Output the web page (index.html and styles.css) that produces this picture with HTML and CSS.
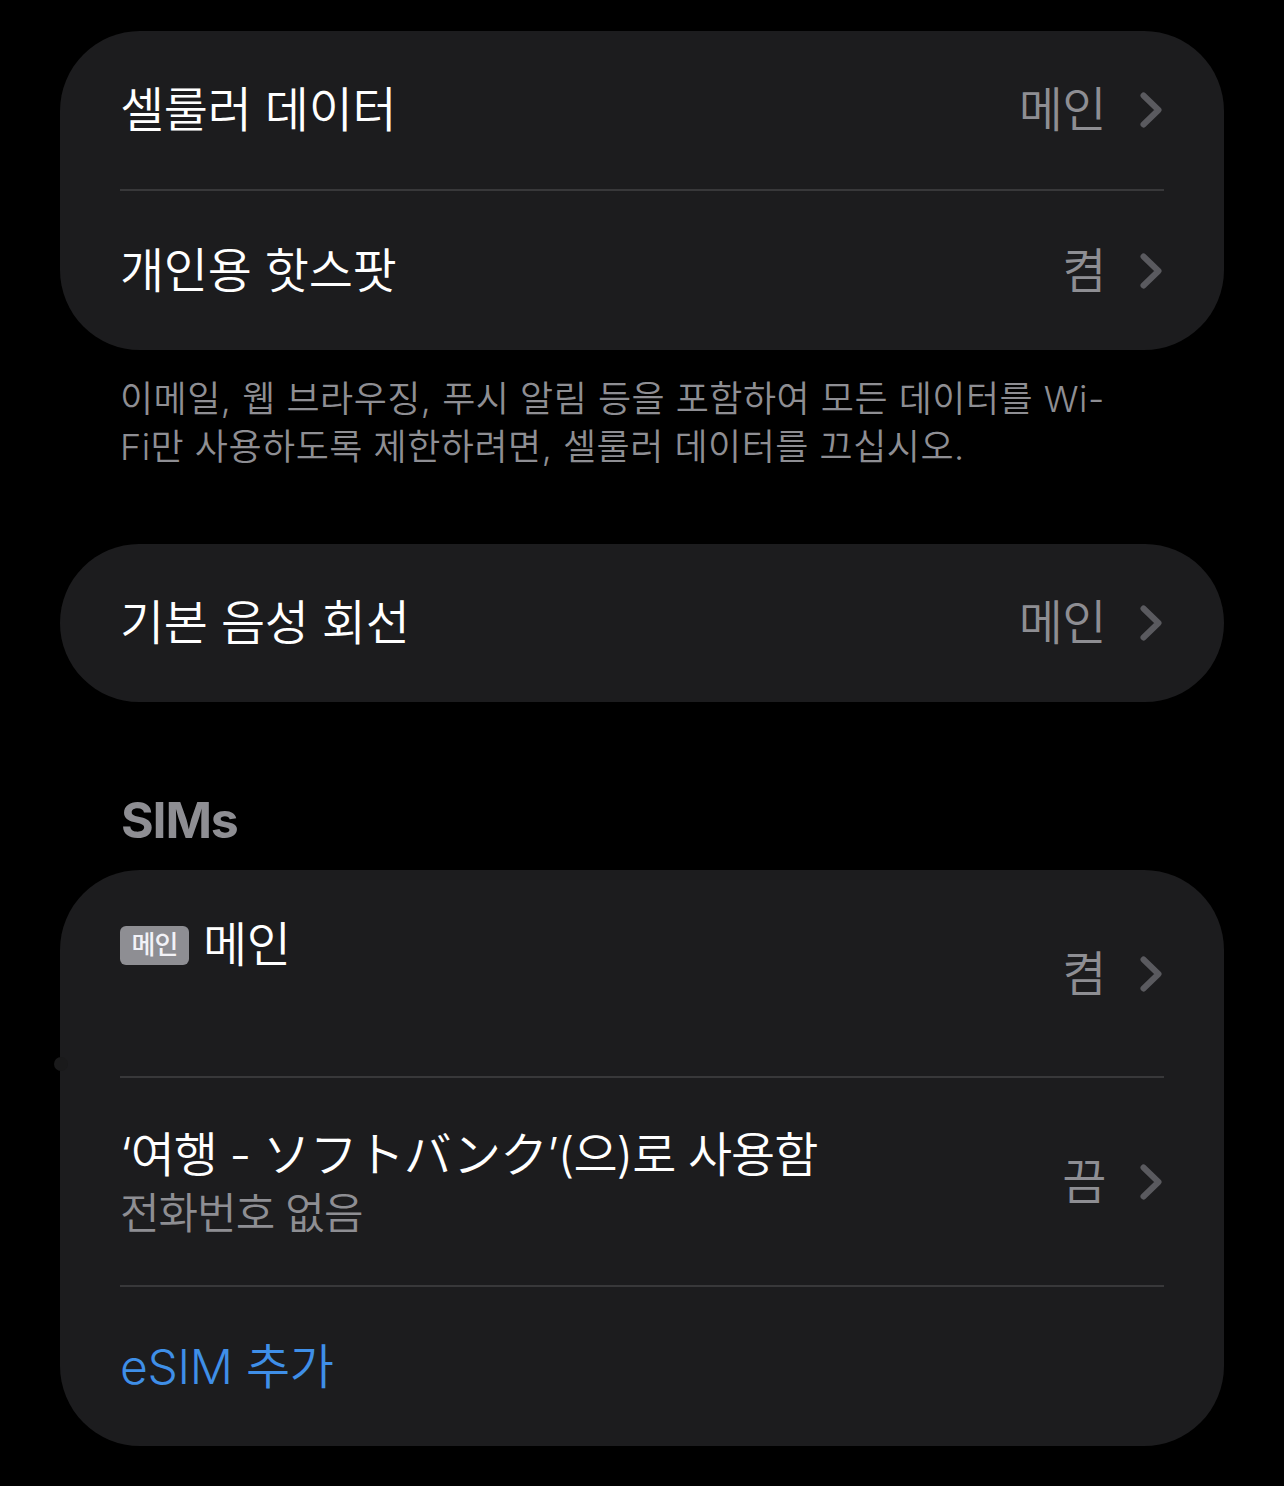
FILE: index.html
```html
<!DOCTYPE html>
<html lang="ko">
<head>
<meta charset="utf-8">
<title>셀룰러</title>
<link rel="stylesheet" href="styles.css">
</head>
<body>
<main class="page">
  <section class="card">
    <div class="row">
      <span class="title">셀룰러 데이터</span>
      <span class="accessory"><span class="value">메인</span><svg class="chev" viewBox="0 0 22 36"><path d="M3.5 3.5 L18.5 18 L3.5 32.5"/></svg></span>
    </div>
    <div class="row">
      <span class="title">개인용 핫스팟</span>
      <span class="accessory"><span class="value">켬</span><svg class="chev" viewBox="0 0 22 36"><path d="M3.5 3.5 L18.5 18 L3.5 32.5"/></svg></span>
    </div>
  </section>
  <p class="footer">이메일, 웹 브라우징, 푸시 알림 등을 포함하여 모든 데이터를 Wi-<br>Fi만 사용하도록 제한하려면, 셀룰러 데이터를 끄십시오.</p>

  <section class="card">
    <div class="row">
      <span class="title">기본 음성 회선</span>
      <span class="accessory"><span class="value">메인</span><svg class="chev" viewBox="0 0 22 36"><path d="M3.5 3.5 L18.5 18 L3.5 32.5"/></svg></span>
    </div>
  </section>

  <h2 class="section-header">SIMs</h2>
  <section class="card">
    <span class="edge-dot"></span>
    <div class="row row-sim">
      <span class="sim-left"><span class="badge">메인</span><span class="title">메인</span></span>
      <span class="accessory"><span class="value">켬</span><svg class="chev" viewBox="0 0 22 36"><path d="M3.5 3.5 L18.5 18 L3.5 32.5"/></svg></span>
    </div>
    <div class="row row-travel">
      <span class="stack">
        <span class="title title-long">‘여행 - ソフトバンク’(으)로 사용함</span>
        <span class="subtitle">전화번호 없음</span>
      </span>
      <span class="accessory"><span class="value">끔</span><svg class="chev" viewBox="0 0 22 36"><path d="M3.5 3.5 L18.5 18 L3.5 32.5"/></svg></span>
    </div>
    <div class="row">
      <span class="title link">eSIM 추가</span>
    </div>
  </section>
</main>
</body>
</html>
```
FILE: styles.css
```css
html, body {
  margin: 0;
  padding: 0;
  background: #000;
}
body {
  font-family: "Inter", "Noto Sans CJK KR", "Noto Sans", sans-serif;
  color: #fff;
}
.page {
  width: 1284px;
  height: 1486px;
  padding: 31px 60px 0;
  box-sizing: border-box;
  overflow: hidden;
}
.card {
  position: relative;
  background: #1c1c1e;
  border-radius: 80px;
  padding: 0 60px;
}
.row {
  display: flex;
  align-items: center;
  justify-content: space-between;
  min-height: 158px;
  box-sizing: border-box;
}
.row + .row {
  border-top: 2px solid #38383a;
  min-height: 161px;
}
.title {
  font-size: 48px;
  font-weight: 350;
  letter-spacing: -0.3px;
  line-height: 58px;
  color: #fff;
}
.title.title-long {
  letter-spacing: -1px;
}
.accessory {
  display: flex;
  align-items: center;
  gap: 34px;
}
.value {
  font-size: 48px;
  font-weight: 350;
  letter-spacing: -0.5px;
  line-height: 58px;
  color: #8e8e93;
}
.chev {
  width: 22px;
  height: 36px;
  margin-right: 2px;
}
.chev path {
  fill: none;
  stroke: #5a5a5f;
  stroke-width: 6;
  stroke-linecap: round;
  stroke-linejoin: round;
}
.footer {
  margin: 25px 0 73px;
  padding: 0 60px;
  font-size: 36px;
  font-weight: 350;
  letter-spacing: 0.5px;
  line-height: 48px;
  color: #8e8e93;
}
.section-header {
  margin: 88px 0 20px;
  padding: 0 61px;
  font-family: "Inter", sans-serif;
  font-weight: 700;
  font-size: 50px;
  letter-spacing: -1.2px;
  line-height: 60px;
  color: #8e8e93;
}
.row.row-sim {
  min-height: 206px;
}
.sim-left {
  align-self: flex-start;
  display: flex;
  align-items: center;
  gap: 14px;
  padding-top: 46px;
}
.badge {
  display: inline-flex;
  align-items: center;
  justify-content: center;
  width: 69px;
  height: 39px;
  border-radius: 6px;
  background: #8e8e93;
  color: #f2f2f7;
  font-size: 26px;
  font-weight: 500;
  letter-spacing: -1px;
  line-height: 1;
}
.row-sim .accessory { margin-top: 2px; }
.row.row-travel {
  min-height: 209px;
}
.stack {
  display: flex;
  flex-direction: column;
  margin-top: 5px;
}
.subtitle {
  font-size: 43px;
  font-weight: 350;
  letter-spacing: -1px;
  line-height: 58px;
  color: #8e8e93;
}
.title.link {
  color: #3f8fe8;
}
.edge-dot {
  position: absolute;
  left: -6px;
  top: 187px;
  width: 14px;
  height: 14px;
  border-radius: 50%;
  background: #1a1a1b;
}
```
